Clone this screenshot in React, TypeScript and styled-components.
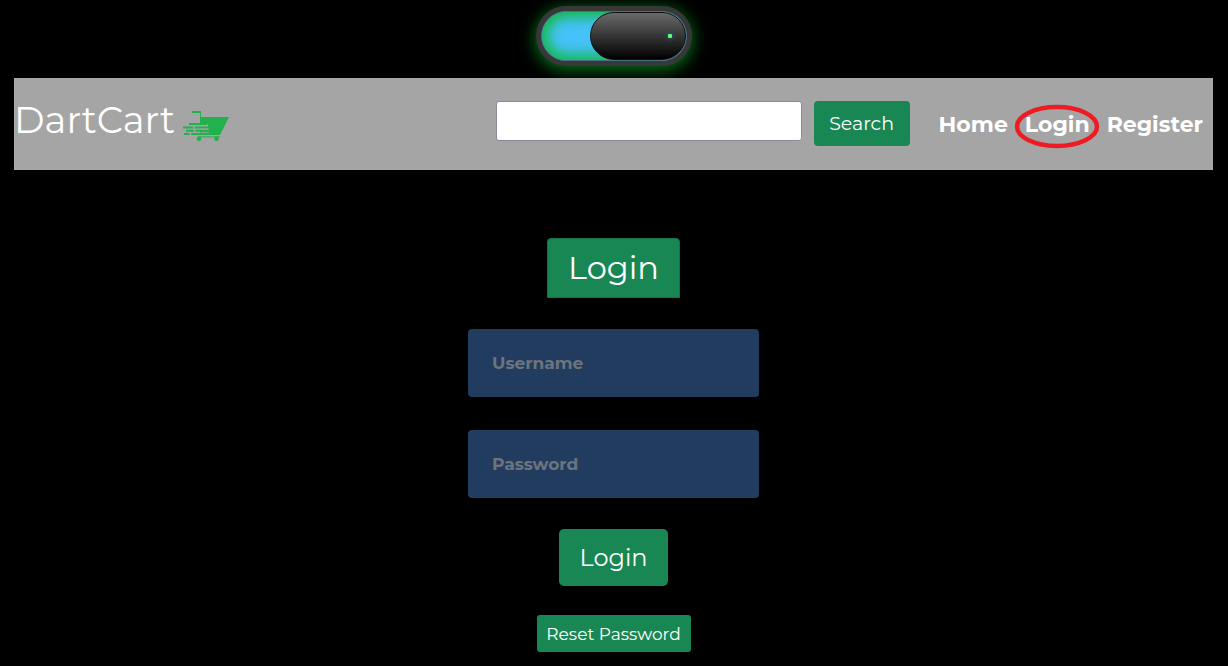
import React from "react";
import styled, { createGlobalStyle } from "styled-components";

const GlobalStyle = createGlobalStyle`
  *, *::before, *::after { box-sizing: border-box; }
  body {
    margin: 0;
    background: #000;
    color: #fff;
    font-family: Montserrat, Inter, "Liberation Sans", sans-serif;
  }
  button, input { font-family: inherit; }
`;

const Page = styled.div`
  display: flex;
  flex-direction: column;
  padding: 6px 15px 14px 14px;
`;

const Switch = styled.label`
  align-self: center;
  display: flex;
  width: 156px;
  height: 60px;
  padding: 5px;
  margin-bottom: 12px;
  border-radius: 30px;
  background: #383838;
  box-shadow: 0 3px 16px 1px #06701a;
  cursor: pointer;
`;

const SwitchInput = styled.input`
  appearance: none;
  position: absolute;
  width: 1px;
  height: 1px;
  margin: 0;
  opacity: 0;
`;

const Track = styled.span`
  flex: 1;
  display: flex;
  justify-content: flex-end;
  border: 1px solid #477083;
  border-radius: 25px;
  background: #46c2fa;
  box-shadow: inset 0 0 14px 5px #0fb83c;
`;

const Thumb = styled.span`
  display: flex;
  align-items: center;
  justify-content: flex-end;
  width: 96px;
  padding-right: 13px;
  border: 1px solid #111;
  border-radius: 24px;
  background: linear-gradient(#6a6a6a, #000);
`;

const Lamp = styled.span`
  width: 4px;
  height: 4px;
  border-radius: 1px;
  background: #62ff70;
  box-shadow: 0 0 4px 1px #26597a;
`;

const Header = styled.header`
  display: flex;
  align-items: flex-start;
  padding: 23px 10px 22px 0;
  background: #a5a5a5;
`;

const Brand = styled.a`
  display: flex;
  align-items: flex-start;
  gap: 8px;
  margin-right: auto;
  color: #fff;
  font-size: 37px;
  font-weight: 400;
  line-height: 38px;
  text-decoration: none;
`;

const CartIcon = styled.svg`
  width: 46px;
  height: 32px;
  margin-top: 9px;
`;

const SearchForm = styled.form`
  display: flex;
  align-items: flex-start;
  gap: 12px;
  margin-right: 29px;
`;

const SearchInput = styled.input`
  width: 306px;
  height: 40px;
  padding: 4px 12px;
  border: 1px solid #8b8b9b;
  border-radius: 3px;
  background: #fff;
  font-size: 20px;
`;

const Button = styled.button<{ $size: "small" | "medium" | "large" }>`
  padding: 0;
  border: 0;
  background: #198754;
  color: #fff;
  font-weight: 400;
  cursor: pointer;
  width: ${({ $size }) => ({ small: 154, medium: 96, large: 109 })[$size]}px;
  height: ${({ $size }) => ({ small: 37, medium: 45, large: 57 })[$size]}px;
  font-size: ${({ $size }) => ({ small: 17, medium: 19, large: 24 })[$size]}px;
  border-radius: ${({ $size }) => ({ small: 3, medium: 4, large: 5 })[$size]}px;
`;

const Nav = styled.nav`
  display: flex;
  gap: 17px;
`;

const NavLink = styled.a`
  position: relative;
  color: #fff;
  font-size: 22px;
  font-weight: 700;
  line-height: 47px;
  text-decoration: none;
`;

const Ring = styled.svg`
  position: absolute;
  top: 50%;
  left: 50%;
  width: 86px;
  height: 48px;
  transform: translate(-50%, -50%);
  pointer-events: none;
`;

const LoginForm = styled.form`
  display: flex;
  flex-direction: column;
  align-items: center;
  margin-top: 68px;
`;

const Title = styled.h1`
  min-width: 133px;
  margin: 0 0 31px;
  border: 1px solid #157347;
  border-radius: 4px 4px 0 0;
  background: #198754;
  font-size: 32px;
  font-weight: 400;
  line-height: 58px;
  text-align: center;
`;

const Fields = styled.div`
  display: flex;
  flex-direction: column;
  gap: 33px;
  width: 291px;
  max-width: 100%;
  margin-bottom: 31px;
`;

const Field = styled.input`
  height: 68px;
  padding: 0 24px;
  border: 0;
  border-radius: 4px;
  background: #223c60;
  color: #fff;
  font-size: 17px;
  font-weight: 700;

  &::placeholder {
    color: #6c757d;
    opacity: 1;
  }
`;

const Actions = styled.div`
  display: flex;
  flex-direction: column;
  align-items: center;
  gap: 29px;
`;

export default function App() {
  return (
    <>
      <GlobalStyle />
      <Page>
        <Switch>
          <SwitchInput type="checkbox" defaultChecked aria-label="Dark theme" />
          <Track>
            <Thumb>
              <Lamp />
            </Thumb>
          </Track>
        </Switch>

        <Header>
          <Brand href="#">
            DartCart
            <CartIcon viewBox="0 0 46 32" aria-hidden="true">
              <g fill="#22b14c">
                <path d="M9 1h9v6h28l-9 18H17v-5h8v-6h-7l-1-1V3H9z" />
                <path d="M6 13h18v2H6zM0 16.500h10v2H0zM11.500 16.500H25v2H11.500zM3 19.700h8v2H3zM12.500 19.700H26v2H12.500zM1 23h5.500v2H1zM8 23h14v2H8z" />
                <path d="M15 26h22v1.500H15z" opacity=".65" />
                <ellipse cx="16" cy="28.800" rx="2.300" ry="2.300" />
                <ellipse cx="33.500" cy="28.800" rx="2.300" ry="2.300" />
              </g>
              <path d="M18 15.750h7M18 19.100h8M18 22.350h8" stroke="#a5a5a5" strokeWidth=".8" />
            </CartIcon>
          </Brand>

          <SearchForm role="search" onSubmit={(e) => e.preventDefault()}>
            <SearchInput type="text" aria-label="Search products" />
            <Button $size="medium" type="submit">Search</Button>
          </SearchForm>

          <Nav>
            <NavLink href="#home">Home</NavLink>
            <NavLink href="#login">
              Login
              <Ring viewBox="0 0 86 48" aria-hidden="true">
                <ellipse cx="43" cy="25.500" rx="40" ry="19.500" fill="none" stroke="#ed1c24" strokeWidth="4.500" />
              </Ring>
            </NavLink>
            <NavLink href="#register">Register</NavLink>
          </Nav>
        </Header>

        <LoginForm onSubmit={(e) => e.preventDefault()}>
          <Title>Login</Title>
          <Fields>
            <Field type="text" placeholder="Username" aria-label="Username" />
            <Field type="password" placeholder="Password" aria-label="Password" />
          </Fields>
          <Actions>
            <Button $size="large" type="submit">Login</Button>
            <Button $size="small" type="button">Reset Password</Button>
          </Actions>
        </LoginForm>
      </Page>
    </>
  );
}
